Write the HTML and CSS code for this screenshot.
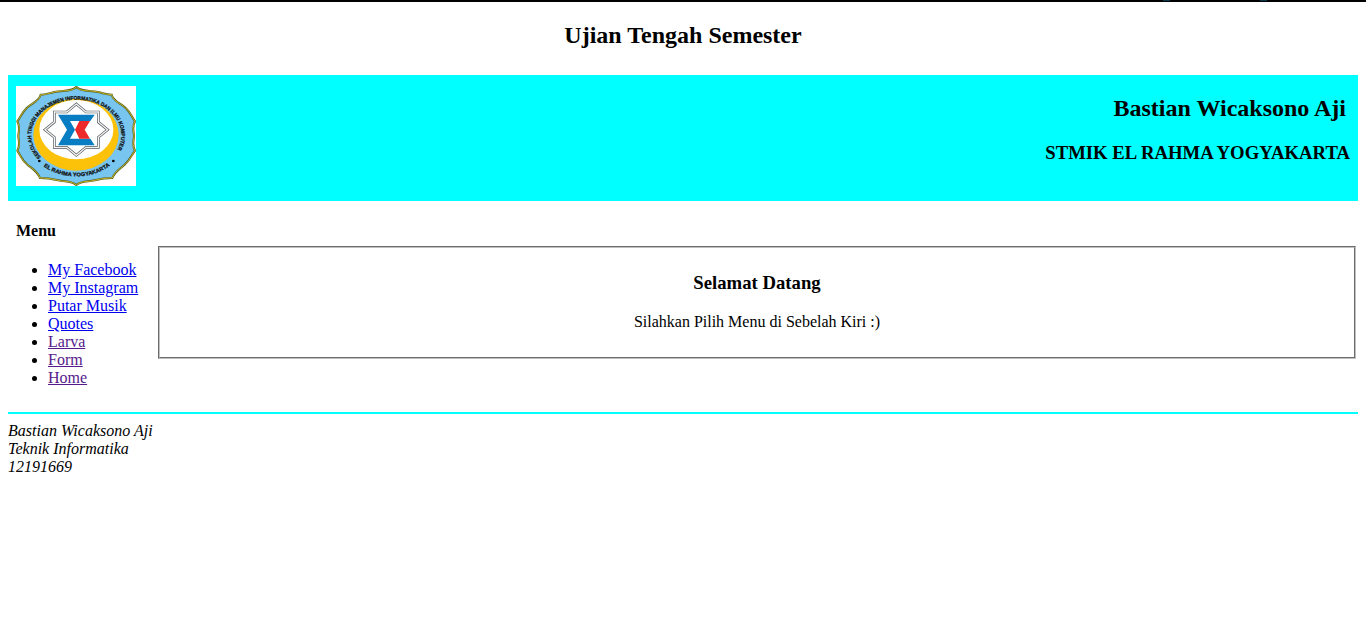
FILE: index.html
```html
<!DOCTYPE html>
<html lang="id">
<head>
<meta charset="utf-8">
<title>Ujian Tengah Semester</title>
<link rel="stylesheet" href="styles.css">
</head>
<body>
<div class="topbar"><i></i><i></i></div>
<h2 class="title">Ujian Tengah Semester</h2>
<header class="banner">
  <svg class="logo" viewBox="0 0 360 300" preserveAspectRatio="none">
    <defs>
      <path id="ring-top" d="M75 213A135 106 0 1 1 287 213"/>
      <path id="ring-bottom" d="M83 241A150 125 0 0 0 279 241"/>
      <path id="outline" d="M181 3C168 18 140 12 115 18S88 26 74 26C70 46 48 50 32 66S16 90 4 106C14 124 7 138 7 150S14 176 4 194C14 208 16 222 34 236S64 256 72 276C90 276 106 278 126 283S166 284 181 297C196 284 216 288 236 283S270 276 289 276C297 256 308 252 326 236S346 208 357 194C347 176 354 162 354 150S347 124 357 106C345 90 346 82 329 66S291 46 287 26C273 26 270 24 246 18S194 18 181 3Z"/>
    </defs>
    <rect width="360" height="300" fill="#fff"/>
    <use class="edge" href="#outline"/>
    <use class="edge-line" href="#outline"/>
    <ellipse cx="180" cy="146" rx="128" ry="108" fill="#fcc20a"/>
    <ellipse cx="181" cy="131" rx="111" ry="89" fill="#fff"/>
    <path class="star" d="M181 54L210 78H247V108L275 131L247 154V184H210L181 208L152 184H115V154L87 131L115 108V78H152Z"/>
    <path class="star-in" d="M181 54L210 78H247V108L275 131L247 154V184H210L181 208L152 184H115V154L87 131L115 108V78H152Z"/>
    <path fill="#087dc3" d="M126 86H236L223 105H162L177 131L162 158H223L236 178H126L153 131Z"/>
    <path fill="#ed2929" d="M190 105H222L206 131L222 158H190L177 131Z"/>
    <text class="seal-text"><textPath href="#ring-top" textLength="498" lengthAdjust="spacingAndGlyphs">SEKOLAH TINGGI MANAJEMEN INFORMATIKA DAN ILMU KOMPUTER</textPath></text>
    <text class="seal-text"><textPath href="#ring-bottom" textLength="212" lengthAdjust="spacingAndGlyphs">EL RAHMA YOGYAKARTA</textPath></text>
    <circle cx="70" cy="225" r="4"/><circle cx="292" cy="225" r="4"/>
  </svg>
  <div class="owner">
    <h2 class="name">Bastian Wicaksono Aji</h2>
    <h3 class="school">STMIK EL RAHMA YOGYAKARTA</h3>
  </div>
</header>
<main class="content">
  <nav class="menu">
    <h4 class="menu-title">Menu</h4>
    <ul class="links">
      <li><a class="link">My Facebook</a></li>
      <li><a class="link">My Instagram</a></li>
      <li><a class="link">Putar Musik</a></li>
      <li><a class="link">Quotes</a></li>
      <li><a class="link visited">Larva</a></li>
      <li><a class="link visited">Form</a></li>
      <li><a class="link visited">Home</a></li>
    </ul>
  </nav>
  <section class="welcome">
    <h3 class="welcome-title">Selamat Datang</h3>
    <p class="welcome-text">Silahkan Pilih Menu di Sebelah Kiri :)</p>
  </section>
</main>
<footer class="footer">Bastian Wicaksono Aji<br>Teknik Informatika<br>12191669</footer>
</body>
</html>
```
FILE: styles.css
```css
body { margin: 0; font: 16px/18px "Liberation Serif", "Times New Roman", serif; color: #000; background: #fff; }
.topbar { display: flex; justify-content: flex-end; gap: 90px; height: 2px; padding-right: 99px; background: #000; }
.topbar i { width: 7px; height: 1px; background: #04384a; }
.title { margin: 20px 0 26px; text-align: center; font-size: 24px; line-height: 27px; }
.banner { display: flex; justify-content: space-between; box-sizing: border-box; height: 126px; margin: 0 8px; padding: 11px 8px 0; background: #0ff; }
.logo { display: block; width: 120px; height: 100px; }
.edge { fill: #78c5ef; stroke: #4d5b20; stroke-width: 6; }
.edge-line { fill: none; stroke: #e3c928; stroke-width: 2.5; }
.star { fill: none; stroke: #55595c; stroke-width: 8; }
.star-in { fill: none; stroke: #f4f4f4; stroke-width: 4; }
.seal-text { font: bold 16px "Liberation Sans", Arial, sans-serif; fill: #111; stroke: #111; stroke-width: .8; }
.owner { padding-top: 9px; text-align: right; }
.name { margin: 0 4px 0 0; font-size: 24px; line-height: 27px; }
.school { margin: 20px 0 0; font-size: 18.72px; line-height: 22px; }
.content { display: flex; align-items: flex-start; height: 211px; margin: 0 10px 0 16px; }
.menu { width: 142px; padding-top: 21px; }
.menu-title { margin: 0 0 21px; font-size: 16px; }
.links { margin: 0; padding-left: 32px; }
.link { color: #00e; text-decoration: underline; white-space: nowrap; }
.visited { color: #551a8b; }
.welcome { flex: 1; box-sizing: border-box; height: 113px; margin-top: 45px; padding-top: 24px; border: 2px groove #c0c0c0; text-align: center; }
.welcome-title { margin: 0 0 19px; font-size: 18.72px; line-height: 22px; }
.welcome-text { margin: 0; }
.footer { margin: 0 8px; padding-top: 8px; border-top: 2px solid #0ff; font-style: italic; }
```
